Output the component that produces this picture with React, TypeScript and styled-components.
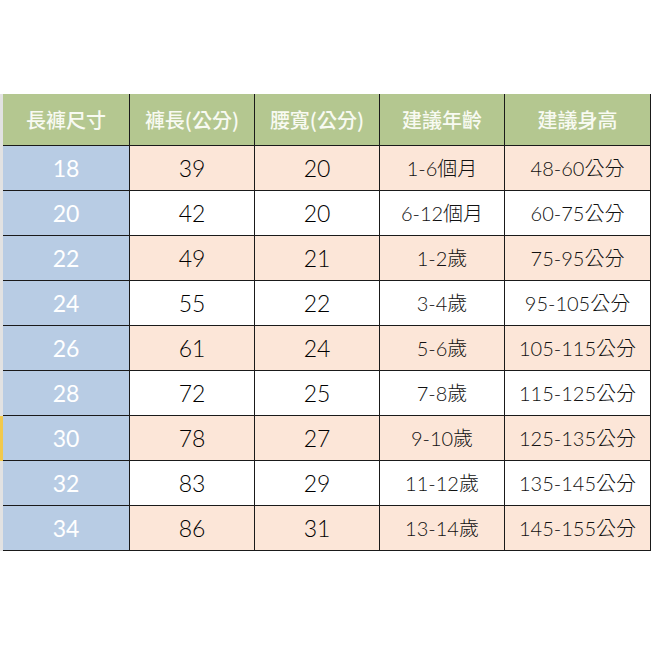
import React from 'react';
import styled, { createGlobalStyle } from 'styled-components';

type SizeRow = {
  size: string;
  length: string;
  waist: string;
  age: string;
  height: string;
};

const rows: SizeRow[] = [
  { size: '18', length: '39', waist: '20', age: '1-6個月', height: '48-60公分' },
  { size: '20', length: '42', waist: '20', age: '6-12個月', height: '60-75公分' },
  { size: '22', length: '49', waist: '21', age: '1-2歲', height: '75-95公分' },
  { size: '24', length: '55', waist: '22', age: '3-4歲', height: '95-105公分' },
  { size: '26', length: '61', waist: '24', age: '5-6歲', height: '105-115公分' },
  { size: '28', length: '72', waist: '25', age: '7-8歲', height: '115-125公分' },
  { size: '30', length: '78', waist: '27', age: '9-10歲', height: '125-135公分' },
  { size: '32', length: '83', waist: '29', age: '11-12歲', height: '135-145公分' },
  { size: '34', length: '86', waist: '31', age: '13-14歲', height: '145-155公分' },
];

const headers = ['長褲尺寸', '褲長(公分)', '腰寬(公分)', '建議年齡', '建議身高'];
const colWidths = [128, 125, 125, 125, 146];

function App() {
  return (
    <>
      <GlobalStyle />
      <Page>
        <SizeTable>
          <colgroup>
            {colWidths.map((w, i) => (
              <Col key={i} $width={w} />
            ))}
          </colgroup>
          <thead>
            <tr>
              {headers.map((h, i) => (
                <HeadCell key={h} $first={i === 0}>
                  {h}
                </HeadCell>
              ))}
            </tr>
          </thead>
          <tbody>
            {rows.map((r, i) => (
              <BodyRow key={r.size} $shaded={i % 2 === 0}>
                <SizeCell $selected={r.size === '30'}>{r.size}</SizeCell>
                <NumCell>{r.length}</NumCell>
                <NumCell>{r.waist}</NumCell>
                <TextCell>{r.age}</TextCell>
                <TextCell>{r.height}</TextCell>
              </BodyRow>
            ))}
          </tbody>
        </SizeTable>
      </Page>
    </>
  );
}

export default App;

const GlobalStyle = createGlobalStyle`
  html, body {
    margin: 0;
    padding: 0;
    background: #ffffff;
  }
  body {
    font-family: "Lato", "Noto Sans CJK TC", sans-serif;
  }
`;

const Page = styled.div`
  width: 651px;
  height: 651px;
  padding-top: 94px;
  box-sizing: border-box;
  overflow: hidden;
`;

const SizeTable = styled.table`
  border-collapse: collapse;
  table-layout: fixed;
  width: 649px;
`;

const Col = styled.col<{ $width: number }>`
  width: ${(p) => p.$width}px;
`;

const HeadCell = styled.th<{ $first?: boolean }>`
  height: 51px;
  padding: 0;
  background: #b4c790;
  color: #f8faf2;
  font-family: "Noto Sans CJK TC", sans-serif;
  font-size: 20px;
  font-weight: 500;
  text-align: center;
  border-left: ${(p) => (p.$first ? '3px solid #e2e2e2' : '1px solid #1a1a1a')};
  border-right: 1px solid #1a1a1a;
  border-bottom: 1px solid #1a1a1a;
`;

const BodyRow = styled.tr<{ $shaded?: boolean }>`
  height: 45px;
  background: ${(p) => (p.$shaded ? '#fce6d8' : '#ffffff')};
`;

const Cell = styled.td`
  padding: 0;
  text-align: center;
  border: 1px solid #1a1a1a;
  line-height: 1;
  font-family: "Lato", "Noto Sans CJK TC", sans-serif;
  font-weight: 300;
`;

const SizeCell = styled(Cell)<{ $selected?: boolean }>`
  background: #b8cce4;
  color: #ffffff;
  font-size: 23px;
  font-weight: 400;
  border-left: 3px solid ${(p) => (p.$selected ? '#f2c94c' : '#e2e2e2')};
`;

const NumCell = styled(Cell)`
  color: #000000;
  font-size: 23px;
`;

const TextCell = styled(Cell)`
  color: #111111;
  font-size: 20px;
`;
